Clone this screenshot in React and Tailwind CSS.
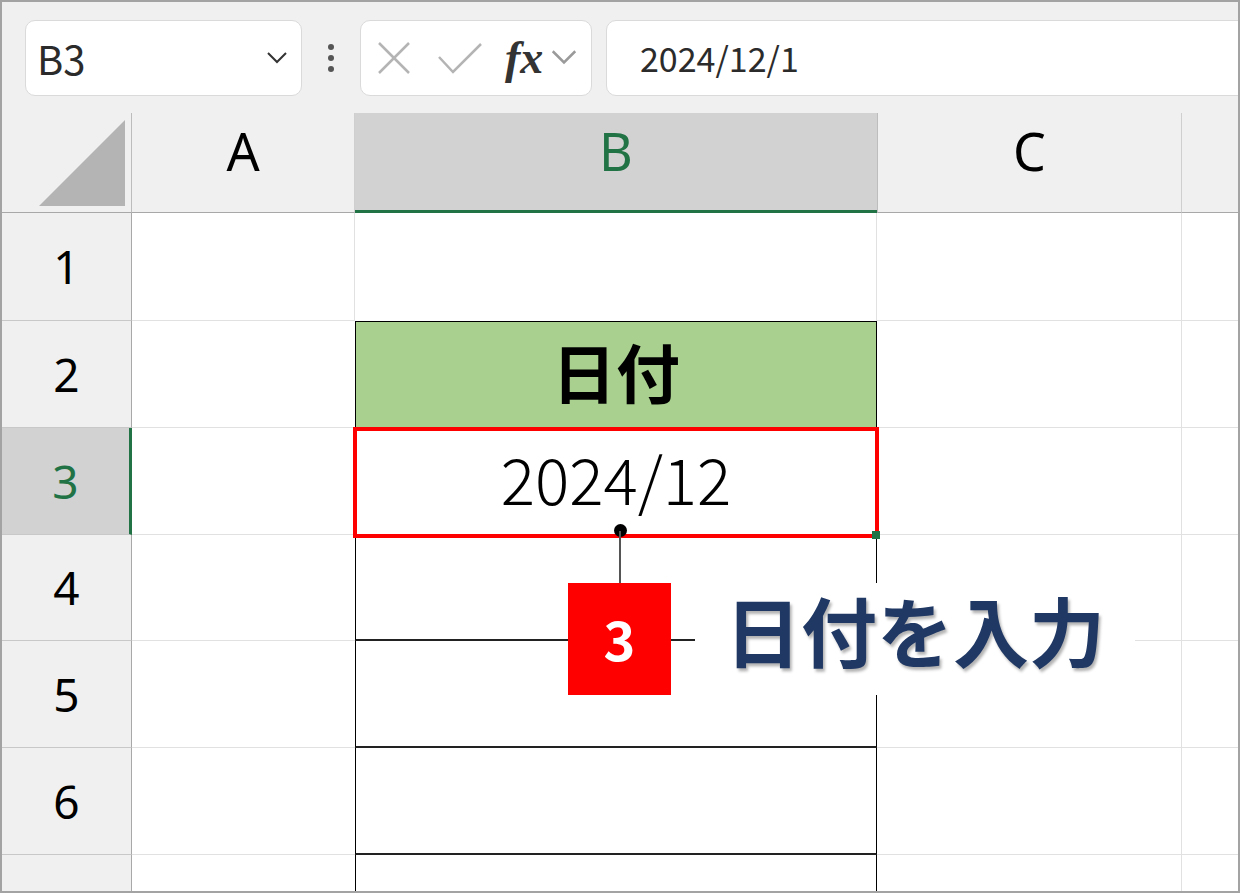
import React from "react";

const jp = { fontFamily: '"Noto Sans CJK JP", "Noto Sans", sans-serif' };
const head = { fontFamily: '"Noto Sans", "Noto Sans CJK JP", sans-serif' };

function Chevron({ className, color = "#333", width = 2 }) {
  return (
    <svg viewBox="0 0 20 12" className={className} fill="none">
      <polyline points="1,1 10,10 19,1" stroke={color} strokeWidth={width} />
    </svg>
  );
}

function Toolbar() {
  return (
    <div className="flex h-[111px] items-center overflow-hidden bg-[#f0f0f0] pl-[23px]">
      <div className="flex h-[76px] w-[277px] shrink-0 items-center justify-between rounded-[10px] border border-[#dadada] bg-white pl-[11px] pr-[14px]">
        <span className="text-[40px] leading-none text-[#2b2b2b]" style={jp}>B3</span>
        <Chevron className="h-[12px] w-[20px]" />
      </div>
      <div className="flex w-[58px] shrink-0 flex-col items-center gap-[5px]">
        <span className="h-[6px] w-[6px] rounded-full bg-[#555]" />
        <span className="h-[6px] w-[6px] rounded-full bg-[#555]" />
        <span className="h-[6px] w-[6px] rounded-full bg-[#555]" />
      </div>
      <div className="flex h-[76px] w-[232px] shrink-0 items-center rounded-[10px] border border-[#dadada] bg-white pl-[16px]">
        <svg viewBox="0 0 34 34" className="h-[34px] w-[34px]" fill="none">
          <line x1="2" y1="2" x2="32" y2="32" stroke="#b4b4b4" strokeWidth="2.5" />
          <line x1="32" y1="2" x2="2" y2="32" stroke="#b4b4b4" strokeWidth="2.5" />
        </svg>
        <svg viewBox="0 0 46 32" className="ml-[26px] h-[32px] w-[46px]" fill="none">
          <polyline points="2,15 16,30 44,2" stroke="#b4b4b4" strokeWidth="2.5" />
        </svg>
        <span
          className="ml-[22px] text-[46px] font-bold italic leading-none text-[#333]"
          style={{ fontFamily: '"Liberation Serif", serif' }}
        >
          fx
        </span>
        <Chevron className="ml-[8px] h-[15px] w-[26px]" color="#9a9a9a" width={2} />
      </div>
      <div className="ml-[14px] flex h-[76px] w-[700px] shrink-0 items-center rounded-[10px] border border-[#dadada] bg-white pl-[33px]">
        <span className="text-[34px] leading-none text-[#2b2b2b]" style={jp}>2024/12/1</span>
      </div>
    </div>
  );
}

const grid = "border-b border-r border-[#e1e1e1]";

function RowHead({ n, selected }) {
  return (
    <div
      className={
        "flex items-center justify-center border-b text-[46px] " +
        (selected
          ? "border-r-[3px] border-b-[#c8c8c8] border-r-[#217346] bg-[#d2d2d2] text-[#217346]"
          : "border-r border-b-[#c8c8c8] border-r-[#a8a8a8] bg-[#f0f0f0] text-black")
      }
      style={head}
    >
      {n}
    </div>
  );
}

export default function App() {
  return (
    <div className="relative h-[893px] w-[1240px] overflow-hidden border-2 border-[#a3a3a3] bg-white">
      <Toolbar />
      <div className="grid h-[778px] grid-cols-[130px_223px_522px_305px_1fr] grid-rows-[100px_108px_107px_107px_106px_107px_107px_1fr]">
        {/* header row */}
        <div className="flex items-end justify-end border-b border-r border-b-[#a8a8a8] border-r-[#bcbcbc] bg-[#f0f0f0] pb-[6px] pr-[6px]">
          <svg viewBox="0 0 86 86" className="h-[86px] w-[86px]">
            <polygon points="0,86 86,0 86,86" fill="#b4b4b4" />
          </svg>
        </div>
        <div className="flex items-center justify-center border-b border-r border-b-[#a8a8a8] border-r-[#cfcfcf] bg-[#f0f0f0] pb-[24px] text-[52px] text-black" style={head}>A</div>
        <div className="flex items-center justify-center border-b-[3px] border-b-[#217346] bg-[#d2d2d2] pb-[22px] text-[52px] text-[#217346]" style={head}>B</div>
        <div className="flex items-center justify-center border-b border-r border-l border-b-[#a8a8a8] border-r-[#cfcfcf] border-l-[#bdbdbd] bg-[#f0f0f0] pb-[24px] text-[52px] text-black" style={head}>C</div>
        <div className="border-b border-b-[#a8a8a8] bg-[#f0f0f0]" />

        {/* row 1 */}
        <RowHead n="1" />
        <div className={grid} />
        <div className="border-r border-[#e1e1e1]" />
        <div className={grid} />
        <div className="border-b border-[#e1e1e1]" />

        {/* row 2 */}
        <RowHead n="2" />
        <div className="border-b border-[#e1e1e1]" />
        <div className="flex items-center justify-center border border-b-0 border-black bg-[#a9d08e] pb-[10px] text-[64px] font-bold text-black" style={jp}>
          日付
        </div>
        <div className={grid} />
        <div className="border-b border-[#e1e1e1]" />

        {/* row 3 */}
        <RowHead n="3" selected />
        <div className="border-b border-[#e1e1e1]" />
        <div className="relative flex items-center justify-center pb-[10px] text-[64px] font-light text-black" style={jp}>
          <span className="absolute -inset-x-[2px] -bottom-[3px] -top-[1px] border-4 border-[#ff0000]" />
          2024/12
        </div>
        <div className={grid} />
        <div className="border-b border-[#e1e1e1]" />

        {/* rows 4-6 */}
        {["4", "5", "6"].map((n) => (
          <React.Fragment key={n}>
            <RowHead n={n} />
            <div className="border-b border-[#e1e1e1]" />
            <div className="border-x border-b-2 border-x-black border-b-[#222]" />
            <div className={grid} />
            <div className="border-b border-[#e1e1e1]" />
          </React.Fragment>
        ))}

        {/* row 7 */}
        <div className="border-r border-[#a8a8a8] bg-[#f0f0f0]" />
        <div />
        <div className="border-x border-black" />
        <div className="border-r border-[#e1e1e1]" />
        <div />
      </div>

      {/* callout overlay */}
      <span className="absolute left-[870px] top-[529px] h-[8px] w-[8px] bg-[#217346]" />
      <span className="absolute left-[612px] top-[522px] h-[13px] w-[13px] rounded-full bg-black" />
      <span className="absolute left-[617px] top-[529px] h-[52px] w-[2px] bg-[#555]" />
      <div className="absolute left-[566px] top-[581px] flex h-[112px] w-[103px] items-center justify-center bg-[#ff0000] pb-[4px] text-[54px] font-bold text-white" style={jp}>
        3
      </div>
      <div
        className="absolute left-[693px] top-[581px] flex h-[112px] w-[440px] items-center justify-center bg-white pb-[20px] text-[76px] font-bold text-[#203864]"
        style={{ ...jp, textShadow: "2px 3px 3px rgba(0,0,0,0.3)" }}
      >
        日付を入力
      </div>
    </div>
  );
}
